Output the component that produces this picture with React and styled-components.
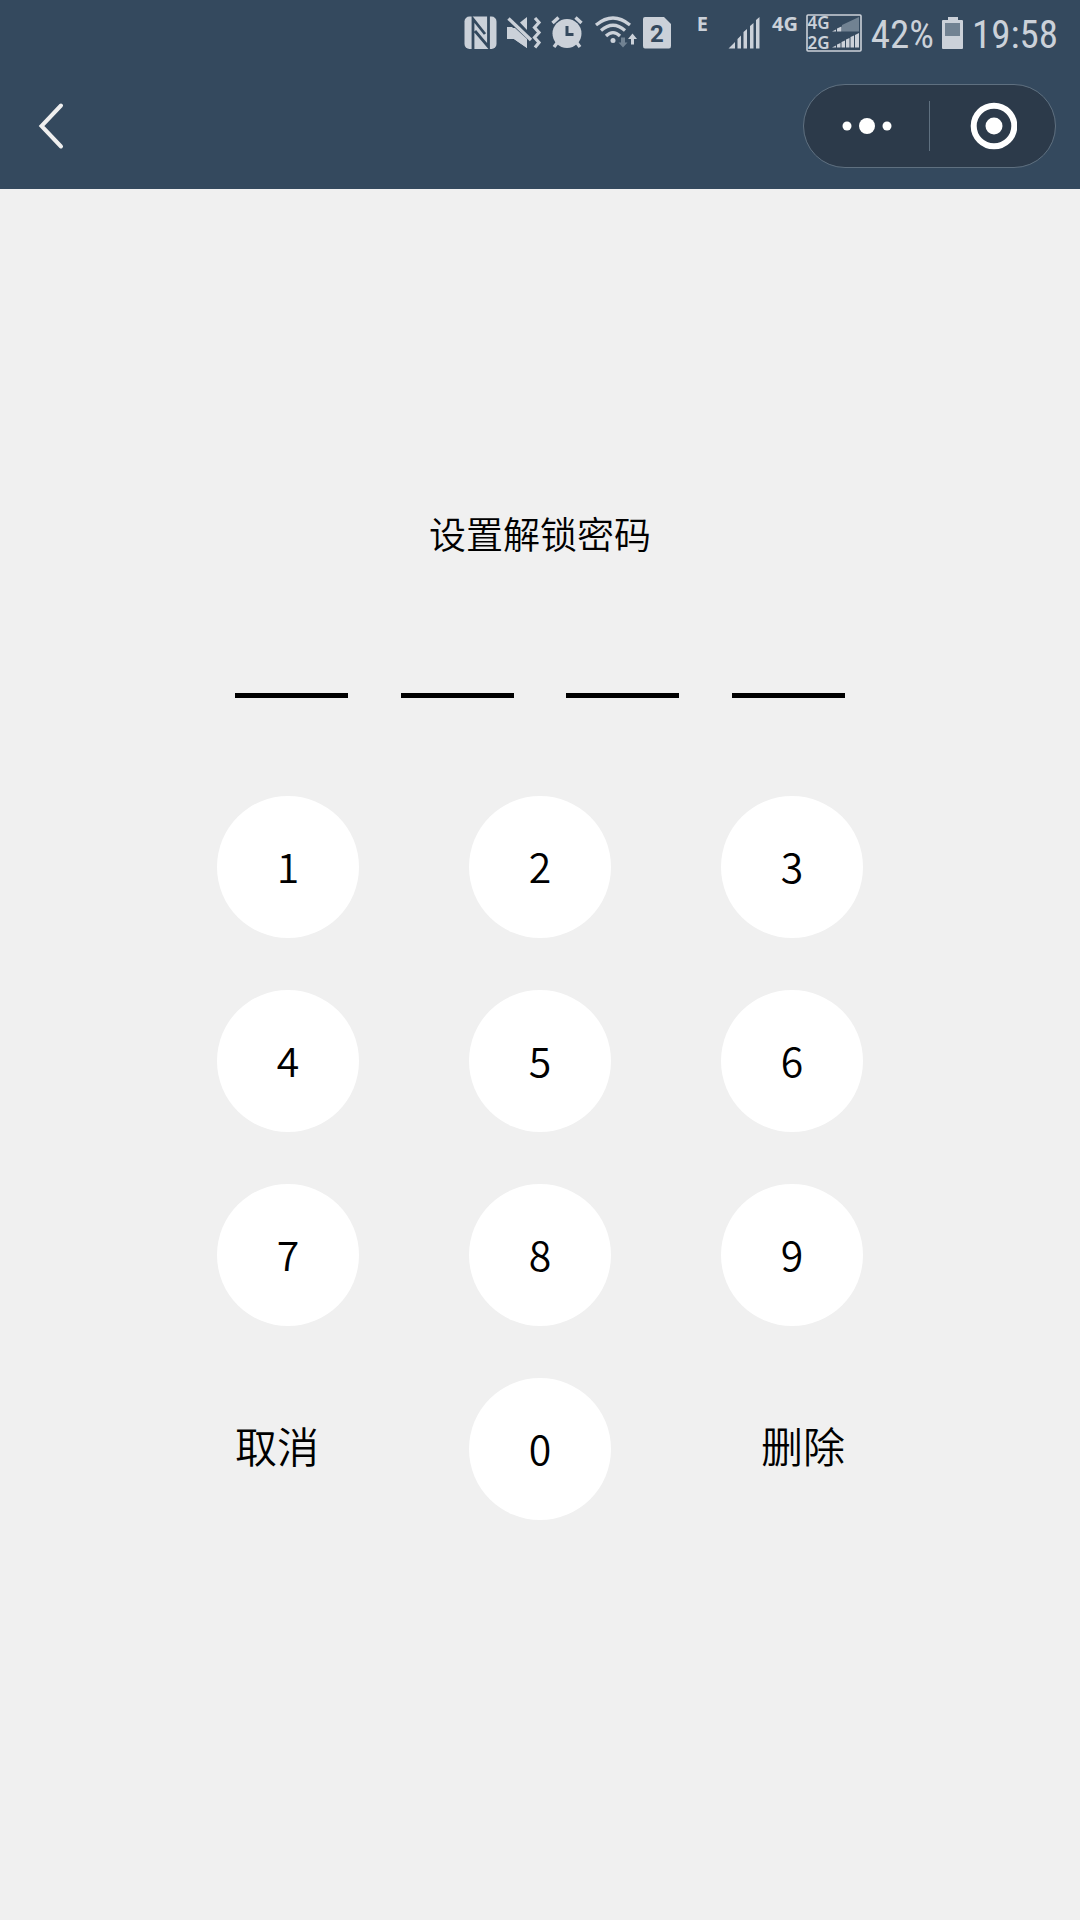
import React, { useState } from "react";
import styled, { createGlobalStyle } from "styled-components";

const ink = "#cbd1d9";
const bar = "#34495e";
const dim = "#718292";

const GlobalStyle = createGlobalStyle`
  body {
    margin: 0;
    background: #f0f0f0;
    color: #000;
    font-family: "Noto Sans CJK SC", sans-serif;
    font-weight: 350;
  }
  * { box-sizing: border-box; }
`;

const Header = styled.header`
  background: ${bar};
`;

const StatusBar = styled.div`
  display: flex;
  align-items: center;
  justify-content: flex-end;
  gap: 8px;
  height: 64px;
  padding: 2px 22px 0 0;
  color: ${ink};
`;

const Icon = styled.svg`
  display: block;
  flex: none;
  overflow: visible;
  fill: ${ink};
`;

const NetworkTag = styled.span`
  width: ${(p) => p.$width}px;
  height: 38px;
  font: 700 20px/20px "Noto Sans", sans-serif;
  text-align: right;
  padding-right: ${(p) => p.$inset || 0}px;
`;

const StatusText = styled.span`
  width: ${(p) => p.$width}px;
  padding-top: 4px;
  font: 400 39px/48px "Roboto Condensed", "Liberation Sans Narrow", Roboto, sans-serif;
  text-align: right;
  white-space: nowrap;
`;

const NavBar = styled.nav`
  display: flex;
  align-items: center;
  justify-content: space-between;
  height: 125px;
  padding: 0 24px 1px;
`;

const PlainButton = styled.button`
  display: flex;
  align-items: center;
  justify-content: center;
  padding: 0;
  border: 0;
  background: none;
  color: inherit;
  font-family: inherit;
  font-weight: inherit;
  cursor: pointer;
`;

const BackButton = styled(PlainButton)`
  width: 54px;
  height: 84px;
`;

const Capsule = styled.div`
  display: flex;
  align-items: center;
  width: 253px;
  height: 84px;
  border: 1px solid #5f7080;
  border-radius: 42px;
  background: #2c3a4a;
`;

const CapsuleButton = styled(PlainButton)`
  flex: 1;
  height: 100%;
`;

const Divider = styled.span`
  width: 1px;
  height: 50px;
  background: #5f7080;
`;

const Screen = styled.main`
  display: flex;
  flex-direction: column;
  align-items: center;
  padding: 316px 24px 64px;
`;

const Title = styled.h1`
  margin: 0;
  font-size: 37px;
  line-height: 56px;
  font-weight: inherit;
`;

const Slots = styled.div`
  display: flex;
  justify-content: space-between;
  width: 610px;
  max-width: 100%;
  margin-top: 132px;
`;

const Slot = styled.span`
  width: 113px;
  height: 5px;
  background: #000;
`;

const Keypad = styled.section`
  display: flex;
  flex-direction: column;
  gap: 52px;
  width: 646px;
  max-width: 100%;
  margin-top: 98px;
`;

const KeyRow = styled.div`
  display: flex;
  align-items: center;
  justify-content: space-between;
  padding: 0 ${(p) => p.$inset || 0}px;
`;

const Key = styled(PlainButton)`
  width: 142px;
  height: 142px;
  padding-bottom: 4px;
  border-radius: 50%;
  background: #fff;
  font-size: 41px;
  line-height: 60px;
`;

const ActionKey = styled(PlainButton)`
  height: 142px;
  padding-bottom: 8px;
  font-size: 42px;
  line-height: 60px;
`;

function NfcIcon() {
  return (
    <Icon width="34" height="34" viewBox="0 0 34 34">
      <rect x="0.5" y="0.5" width="32" height="32.5" rx="5" />
      <path d="M9 34V3L21 18M24.5 0V31L11 15" fill="none" stroke={bar} strokeWidth="2.8" />
    </Icon>
  );
}

function MuteVibrateIcon() {
  return (
    <Icon width="36" height="34" viewBox="0 0 36 34">
      <path d="M14 6.500L21 1V14Z" />
      <path d="M1 11H7L21 25V32L8 23H1Z" />
      <path d="M2.500 3.500L25.500 25" stroke={bar} strokeWidth="6" />
      <path d="M1 12H9L21 23V32L8 23H1Z" />
      <path d="M2.500 2.500L25 24" stroke={ink} strokeWidth="3.4" />
      <path d="M29 2L33 6.500L28.500 11.500L33 16.500L28.500 21.500L33 26.500L29 31.500" fill="none" stroke={ink} strokeWidth="3.2" />
    </Icon>
  );
}

function AlarmIcon() {
  return (
    <Icon width="36" height="34" viewBox="0 0 36 34">
      <circle cx="17" cy="17.500" r="14.500" />
      <path d="M2.500 7L8.500 1.500M31.500 7L25.500 1.500M7 27L4 31M27 27L30 31" stroke={ink} strokeWidth="3.4" />
      <path d="M17 10V18.500H23.500" fill="none" stroke={bar} strokeWidth="3" />
    </Icon>
  );
}

function WifiIcon() {
  return (
    <Icon width="42" height="34" viewBox="0 0 42 34">
      <g fill="none" stroke={ink} strokeWidth="3.2">
        <path d="M2 9Q19 -5 36 9" />
        <path d="M7 14.500Q19 4 31 14.500" />
        <path d="M12 20Q19 13 26 20" />
      </g>
      <circle cx="19" cy="24.500" r="2.500" />
      <path d="M27 21.500H31V26.500H33.500L29 31.500L24.500 26.500H27Z" fill={dim} />
      <path d="M37 28.500V23H34L38.500 17.500L43 23H40V28.500Z" />
    </Icon>
  );
}

function SimIcon() {
  return (
    <Icon width="28" height="32" viewBox="0 0 28 32">
      <path d="M1 0H20L27 7V29Q27 31.500 25 31.500H1Q-1 31.500 -1 29V2Q-1 0 1 0Z" />
      <text x="13" y="24.500" textAnchor="middle" fill={bar} fontFamily="Roboto, sans-serif" fontWeight="700" fontSize="24">2</text>
    </Icon>
  );
}

function SignalIcon() {
  return (
    <Icon width="32" height="32" viewBox="0 0 32 32">
      <path d="M0.500 31.500L7 25V31.500ZM9.500 31.500V22L13 18.500V31.500ZM15.500 31.500V15L19 12V31.500ZM22 31.500V9L25.500 6V31.500ZM28 31.500V3L31.500 0V31.500Z" />
    </Icon>
  );
}

function DualSignalIcon() {
  const font = { fontFamily: '"Noto Sans", sans-serif', fontWeight: 600, fontSize: 17 };
  return (
    <Icon width="56" height="38" viewBox="0 0 56 38">
      <rect x="1" y="1" width="54" height="36" rx="1" fill="none" stroke={ink} strokeWidth="1.6" />
      <text x="1.500" y="15" {...font}>4G</text>
      <text x="1.500" y="34.500" {...font}>2G</text>
      <path d="M36 17.500V11L53 3V17.500Z" fill={dim} />
      <path d="M26 17.500L30 15.500V17.500ZM31 17.500V14.500L35.500 12.500V17.500Z" />
      <path d="M26 33.500L30 31.500V33.500ZM31 33.500V30.500L34.500 29V33.500ZM35.500 33.500V28L39 26.500V33.500ZM40 33.500V25.500L43.500 24V33.500ZM44.500 33.500V23L48 21.500V33.500ZM49 33.500V21L53 19V33.500Z" />
    </Icon>
  );
}

function BatteryIcon() {
  return (
    <Icon width="22" height="32" viewBox="0 0 22 32">
      <path d="M6 3V0H16V3H20Q21 3 21 4V31Q21 32 20 32H1Q0 32 0 31V4Q0 3 1 3Z" />
      <rect x="3" y="6" width="15" height="13" fill={dim} />
    </Icon>
  );
}

const digitRows = [
  [1, 2, 3],
  [4, 5, 6],
  [7, 8, 9],
];

export default function App() {
  const [code, setCode] = useState([]);
  const press = (digit) => setCode((prev) => (prev.length < 4 ? [...prev, digit] : prev));

  return (
    <>
      <GlobalStyle />
      <Header>
        <StatusBar>
          <NfcIcon />
          <MuteVibrateIcon />
          <AlarmIcon />
          <WifiIcon />
          <SimIcon />
          <NetworkTag $width={40} $inset={12}>E</NetworkTag>
          <SignalIcon />
          <NetworkTag $width={30}>4G</NetworkTag>
          <DualSignalIcon />
          <StatusText $width={64}>42%</StatusText>
          <BatteryIcon />
          <StatusText $width={86}>19:58</StatusText>
        </StatusBar>
        <NavBar>
          <BackButton aria-label="返回">
            <svg width="28" height="48" viewBox="0 0 28 48">
              <path d="M24 3.500L4.500 24L24 44.500" fill="none" stroke="#efefef" strokeWidth="4" strokeLinecap="round" />
            </svg>
          </BackButton>
          <Capsule>
            <CapsuleButton aria-label="更多">
              <svg width="50" height="18" viewBox="0 0 50 18" fill="#fff">
                <circle cx="5" cy="9" r="4.500" />
                <circle cx="25" cy="9" r="8" />
                <circle cx="45" cy="9" r="4.500" />
              </svg>
            </CapsuleButton>
            <Divider />
            <CapsuleButton aria-label="关闭">
              <svg width="48" height="48" viewBox="0 0 48 48">
                <circle cx="25" cy="24" r="20.300" fill="none" stroke="#fff" strokeWidth="6" />
                <circle cx="25" cy="24" r="8.500" fill="#fff" />
              </svg>
            </CapsuleButton>
          </Capsule>
        </NavBar>
      </Header>
      <Screen>
        <Title>设置解锁密码</Title>
        <Slots>
          {[0, 1, 2, 3].map((i) => (
            <Slot key={i} data-filled={i < code.length} />
          ))}
        </Slots>
        <Keypad>
          {digitRows.map((row) => (
            <KeyRow key={row[0]}>
              {row.map((digit) => (
                <Key key={digit} onClick={() => press(digit)}>{digit}</Key>
              ))}
            </KeyRow>
          ))}
          <KeyRow $inset={18}>
            <ActionKey onClick={() => setCode([])}>取消</ActionKey>
            <Key onClick={() => press(0)}>0</Key>
            <ActionKey onClick={() => setCode((prev) => prev.slice(0, -1))}>删除</ActionKey>
          </KeyRow>
        </Keypad>
      </Screen>
    </>
  );
}
